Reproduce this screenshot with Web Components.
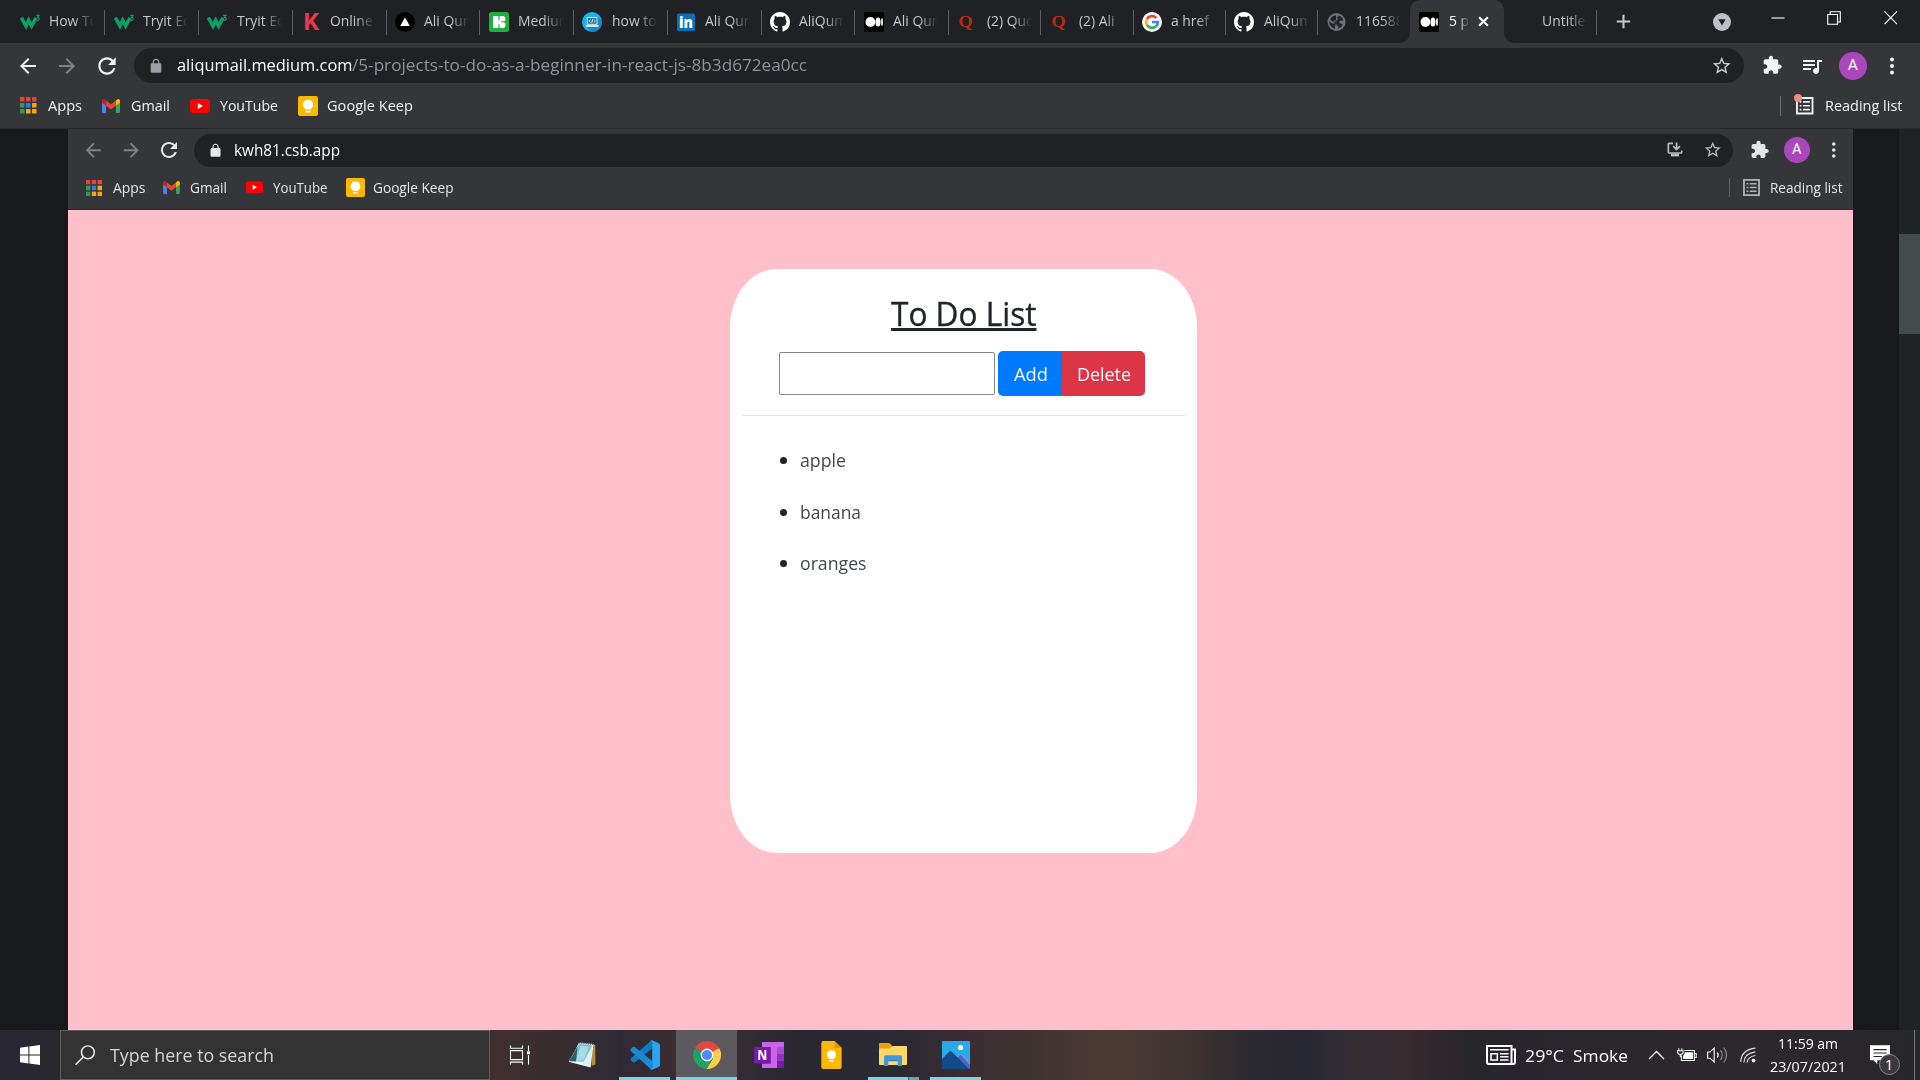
<!DOCTYPE html>
<html lang="en">
<head>
<meta charset="utf-8">
<title>5 projects to do as a beginner in React JS</title>
<style>
html,body{margin:0;padding:0;width:1920px;height:1080px;overflow:hidden;background:#18191a}
body{font-family:"Open Sans","Noto Sans",sans-serif;color:#e8eaed}
</style>
</head>
<body>
<desktop-screen></desktop-screen>
<script>
const ICONS = {
  back: ['0 0 24 24', '<path fill="currentColor" d="M20 11H7.83l5.59-5.59L12 4l-8 8 8 8 1.41-1.41L7.83 13H20v-2z"/>'],
  forward: ['0 0 24 24', '<path fill="currentColor" d="M12 4l-1.41 1.41L16.17 11H4v2h12.17l-5.58 5.59L12 20l8-8z"/>'],
  reload: ['0 0 24 24', '<path fill="currentColor" d="M17.65 6.35C16.2 4.9 14.21 4 12 4c-4.42 0-7.99 3.58-7.99 8s3.57 8 7.99 8c3.73 0 6.84-2.55 7.73-6h-2.08c-.82 2.33-3.04 4-5.65 4-3.31 0-6-2.69-6-6s2.69-6 6-6c1.66 0 3.14.69 4.22 1.78L13 11h7V4l-2.35 2.35z"/>'],
  lock: ['0 0 24 24', '<path fill="currentColor" d="M18 8h-1V6c0-2.76-2.24-5-5-5S7 3.24 7 6v2H6c-1.1 0-2 .9-2 2v10c0 1.1.9 2 2 2h12c1.1 0 2-.9 2-2V10c0-1.1-.9-2-2-2zm-2.9 0H8.9V6c0-1.71 1.39-3.1 3.1-3.1 1.71 0 3.1 1.39 3.1 3.1v2z"/>'],
  star: ['0 0 24 24', '<path fill="currentColor" d="M22 9.24l-7.19-.62L12 2 9.19 8.63 2 9.24l5.46 4.73L5.82 21 12 17.27 18.18 21l-1.63-7.03L22 9.24zM12 15.4l-3.76 2.27 1-4.28-3.32-2.88 4.38-.38L12 6.1l1.71 4.04 4.38.38-3.32 2.88 1 4.28L12 15.4z"/>'],
  puzzle: ['0 0 24 24', '<path fill="currentColor" d="M20.5 11H19V7c0-1.1-.9-2-2-2h-4V3.5C13 2.12 11.88 1 10.5 1S8 2.12 8 3.5V5H4c-1.1 0-1.99.9-1.99 2v3.8H3.5c1.49 0 2.7 1.21 2.7 2.7s-1.21 2.7-2.7 2.7H2V20c0 1.1.9 2 2 2h3.8v-1.5c0-1.49 1.21-2.7 2.7-2.7 1.49 0 2.7 1.21 2.7 2.7V22H17c1.1 0 2-.9 2-2v-4h1.5c1.38 0 2.5-1.12 2.5-2.5S21.88 11 20.5 11z"/>'],
  queue: ['0 0 24 24', '<path fill="currentColor" d="M15 6H3v2h12V6zm0 4H3v2h12v-2zM3 16h8v-2H3v2zM17 6v8.18c-.31-.11-.65-.18-1-.18-1.66 0-3 1.34-3 3s1.34 3 3 3 3-1.34 3-3V8h3V6h-5z"/>'],
  dots: ['0 0 6 20', '<g fill="currentColor"><circle cx="3" cy="3.4" r="2"/><circle cx="3" cy="10" r="2"/><circle cx="3" cy="16.6" r="2"/></g>'],
  install: ['0 0 18 18', '<g fill="none" stroke="currentColor" stroke-width="1.7"><path d="M7 2.3H3.2Q2.3 2.3 2.3 3.2V11Q2.3 12 3.2 12H14.8Q15.7 12 15.7 11V9.5"/><path d="M10.6 1.5V8.2M7.2 5.2L10.6 8.6L14 5.2"/></g><rect x="5" y="12.6" width="8" height="2.8" fill="currentColor"/>'],
  w3: ['0 0 20 20', '<path fill="none" stroke="#0ba06a" stroke-width="3.6" d="M1.4 5.6L6 14L8.7 8.4L11.6 14L16 5.8"/><path fill="none" stroke="#0ba06a" stroke-width="1.2" d="M16.2 3.3H19L17.4 5.4Q19.4 5.5 19.2 7Q18.9 8.8 16.3 8"/>'],
  k: ['0 0 20 20', '<text x="2.6" y="18.4" font-family="Roboto,sans-serif" font-weight="700" font-size="23.5" textLength="15.5" lengthAdjust="spacingAndGlyphs" fill="#e63950">K</text>'],
  vercel: ['0 0 20 20', '<circle cx="10" cy="10" r="10" fill="#000"/><path fill="#fff" d="M10 5.6L14.8 14H5.2z"/>'],
  biz: ['0 0 20 20', '<rect width="20" height="20" rx="2.5" fill="#1faf3c"/><path fill="#fff" d="M4 4h5.2l.9 1.2L11 4h3.3q2.2.5 2 2.5v2L15 9.8l1.4 1.6V14q-.3 1.8-2.2 2H11l-.9-1-.9 1H4z"/><path stroke="#1faf3c" d="M10 4V8.5M10 12V16M12 9.8H16.3"/>'],
  howto: ['0 0 20 20', '<circle cx="10" cy="10" r="10" fill="#14b6f0"/><path d="M16 5L19.9 9A10 10 0 0 1 9 20L5 15z" fill="#1788c4"/><rect x="5" y="5" width="10.5" height="7.8" rx=".8" fill="#e3f0f6"/><rect x="6" y="6" width="8.5" height="5.8" fill="#2d6c9b"/><path d="M8.5 7.5L7.2 9L8.5 10.5M12 7.5L13.3 9L12 10.5M10.8 7L9.7 11" stroke="#fff" stroke-width=".8" fill="none"/><path d="M4 13h12.5v2H4z" fill="#dbe8ee"/>'],
  linkedin: ['0 0 20 20', '<rect x="1" y="1.5" width="18" height="17.5" rx="1.5" fill="#0a6fb3"/><text x="2.9" y="16" font-family="Open Sans,sans-serif" font-weight="800" font-size="15.5" textLength="14" lengthAdjust="spacingAndGlyphs" fill="#fff">in</text>'],
  github: ['0 0 16 16', '<path fill="#fff" d="M8 0C3.58 0 0 3.58 0 8c0 3.54 2.29 6.53 5.47 7.59.4.07.55-.17.55-.38 0-.19-.01-.82-.01-1.49-2.01.37-2.53-.49-2.69-.94-.09-.23-.48-.94-.82-1.13-.28-.15-.68-.52-.01-.53.63-.01 1.08.58 1.23.82.72 1.21 1.87.87 2.33.66.07-.52.28-.87.51-1.07-1.78-.2-3.64-.89-3.64-3.95 0-.87.31-1.59.82-2.15-.08-.2-.36-1.02.08-2.12 0 0 .67-.21 2.2.82.64-.18 1.32-.27 2-.27s1.36.09 2 .27c1.53-1.04 2.2-.82 2.2-.82.44 1.1.16 1.92.08 2.12.51.56.82 1.27.82 2.15 0 3.07-1.87 3.75-3.65 3.95.29.25.54.73.54 1.48 0 1.07-.01 1.93-.01 2.2 0 .21.15.46.55.38A8.01 8.01 0 0 0 16 8c0-4.42-3.58-8-8-8z"/>'],
  medium: ['0 0 20 20', '<rect width="20" height="20" rx="1.5" fill="#000"/><g fill="#fff"><circle cx="6.4" cy="10" r="4.9"/><ellipse cx="14" cy="10" rx="2.5" ry="4.6"/><ellipse cx="18" cy="10" rx=".9" ry="4"/></g>'],
  quora: ['0 0 20 20', '<text x="1.2" y="14.6" font-family="Liberation Serif,serif" font-weight="700" font-size="17.5" textLength="14.5" lengthAdjust="spacingAndGlyphs" fill="#b92b08">Q</text>'],
  google: ['0 0 20 20', '<circle cx="10" cy="10" r="10" fill="#fff"/><g fill="none" stroke-width="2.7"><path stroke="#ea4335" d="M14.3 6A5.9 5.9 0 0 0 4.9 7.1"/><path stroke="#fbbc05" d="M4.9 7.1A5.9 5.9 0 0 0 4.9 12.9"/><path stroke="#34a853" d="M4.9 12.9A5.9 5.9 0 0 0 13.9 14.4"/><path stroke="#4285f4" d="M13.9 14.4A5.9 5.9 0 0 0 15.9 10H10"/></g>'],
  globe: ['0 0 20 20', '<circle cx="9.5" cy="10" r="9" fill="#6d7175"/><path fill="#222327" d="M8.8 3.2Q4.6 3.8 3.2 7.6L5 9.3L8.8 9.6L9.6 11.5L8.2 13L8 16.8Q4.5 16.2 2.6 12.6L2.4 9.5L6 12L7.8 11.3L6.9 8.4H9.6L11.3 6.7L9.4 5.5L12.5 3.7Q16 5.5 16.5 8.8L13 8.5L12 10.8L15.8 12.5Q14.7 15.5 11 16.8L11.7 14.2L9.6 13.4z"/>'],
  blank: ['0 0 20 20', ''],
  close: ['0 0 14 14', '<path d="M2.3 2.3L11.7 11.7M11.7 2.3L2.3 11.7" stroke="#fff" stroke-width="2.3"/>'],
  plus: ['0 0 16 16', '<path d="M8 .8V15.2M.8 8H15.2" stroke="#c6c8cb" stroke-width="2.2"/>'],
  tabsearch: ['0 0 18 18', '<circle cx="9" cy="9" r="9" fill="#bdc1c6"/><path d="M5.3 6.2H12.7L9 12.4z" fill="#202124"/>'],
  minimize: ['0 0 14 14', '<path d="M.5 7H13.5" stroke="#fff" stroke-width="1.1"/>'],
  restore: ['0 0 14 14', '<path d="M.7 3.5H10.5V13.3H.7zM3.2 3.5V.8H13.3V11H10.5" fill="none" stroke="#fff" stroke-width="1.1"/>'],
  winclose: ['0 0 14 14', '<path d="M.5 .5L13.5 13.5M13.5 .5L.5 13.5" stroke="#fff" stroke-width="1.15"/>'],
  apps: ['0 0 17 17', '<g><path fill="#e8453c" d="M0 0h4.6v4.6H0zM6.2 0h4.6v4.6H6.2zM12.4 0H17v4.6h-4.6z"/><path fill="#34995a" d="M0 6.2h4.6v4.6H0zM0 12.4h4.6V17H0z"/><path fill="#2a7de8" d="M6.2 6.2h4.6v4.6H6.2z"/><path fill="#f6a80c" d="M6.2 12.4h4.6V17H6.2z"/><path fill="#f6a80c" d="M12.4 6.2H17v4.6h-4.6zM12.4 12.4H17V17h-4.6z"/></g>'],
  gmail: ['0 0 18 14', '<path fill="#4285f4" d="M0 3V12.8Q0 14 1.2 14H4.1V6z"/><path fill="#34a853" d="M18 3V12.8Q18 14 16.8 14H13.9V6z"/><path fill="#ea4335" d="M4.1 1.6L9 5.3L13.9 1.6V6.8L9 10.5L4.1 6.8z"/><path fill="#c5221f" d="M0 2Q0 .2 1.8.1Q2.6 0 4.1 1.6V6.8L0 3.7z"/><path fill="#fbbc04" d="M18 2Q18 .2 16.2.1Q15.4 0 13.9 1.6V6.8L18 3.7z"/>'],
  youtube: ['0 0 20 14', '<rect width="20" height="14" rx="3.4" fill="#f00"/><path fill="#fff" d="M7.8 4V10L13 7z"/>'],
  keep: ['0 0 20 20', '<rect width="20" height="20" rx="2" fill="#fdb902"/><path fill="#fff" d="M10 3.8A4.9 4.9 0 0 0 7.3 12.9V13.6H12.7V12.9A4.9 4.9 0 0 0 10 3.8zM7.6 14.8H12.4V16.4H7.6z"/>'],
  reading: ['0 0 18 18', '<path fill="none" stroke="currentColor" stroke-width="1.9" d="M1 1H17V17H1z"/><path d="M3.8 5H5.6M3.8 9H5.6M3.8 13H5.6M7.2 5H14.3M7.2 9H14.3M7.2 13H14.3" stroke="currentColor" stroke-width="1.7"/>'],
  windows: ['0 0 20 20', '<path fill="#fff" d="M0 2.8L8.4 1.6V9.5H0zM9.4 1.4L20 0V9.5H9.4zM0 10.5H8.4V18.4L0 17.2zM9.4 10.5H20V20L9.4 18.6z"/>'],
  search: ['0 0 21 21', '<g fill="none" stroke="#f1f1f1" stroke-width="1.5"><circle cx="13.2" cy="7.5" r="6.6"/><path d="M8.4 12.2L.6 20.2"/></g>'],
  taskview: ['0 0 20 20', '<g fill="none" stroke="#fff" stroke-width="1.1"><path d="M.5 5.6H12.5V14.6H.5zM.5 .5V3.2H12.5V.5M.5 19.5V17.1H12.5V19.5M18.5 .5V6M18.5 10V19.5"/></g><path fill="#fff" d="M17 6.3h3v3h-3z"/>'],
  notepad: ['0 0 28 28', '<path fill="#b98c3b" d="M24.5 3L27.3 4.2L27.4 23.5L23.5 25z"/><path fill="#f1f5f5" d="M11 1.5L25.5 3L22.6 26.6L.5 20.7L6 11.5z"/><path fill="#7fc3d0" d="M11 2.8L24.4 4.5L17.5 21L1.2 20z"/><path fill="#2f5f6b" d="M9.5 5.5L1.2 20L8 20.5z"/><path fill="#a8dce3" d="M12.5 5L21 6L15.5 19L8 20z"/><path fill="#dfeff1" d="M24.5 4.5L21.4 25.8L14 23.5z"/><path d="M11 1.7L25 3.2" stroke="#555" stroke-width="1.6" stroke-dasharray="1.3 .9"/>'],
  vscode: ['0 0 30 30', '<path fill="#0e7cc4" d="M1 18.2Q-.2 19.4 1 20.6L2.8 22.3Q3.8 23 4.8 22.3L22.2 8.6V.3Q21.4 0 20.6 .9z"/><path fill="#1a8ad6" d="M1 11.2Q-.2 10 1 8.8L2.8 7.1Q3.8 6.4 4.8 7.1L22.2 21V29.7Q21.4 30 20.6 29z"/><path fill="#2aa4f4" d="M22.2 .2L28.8 3.2Q30 3.9 30 5.1V24.8Q30 26.1 28.8 26.7L22.2 29.8Q21 30 20.3 29Q21.8 29.2 22.2 27.9V2.2Q21.8 .7 20.3 1.1Q21 0 22.2 .2z"/>'],
  chrome: ['0 0 28 28', '<path fill="#dd4b3e" d="M14 14L1.9 7A14 14 0 0 1 26.1 7z"/><path fill="#1da462" d="M14 14L14 28A14 14 0 0 1 1.9 7L8 17.5z"/><path fill="#ffcd46" d="M14 14L26.1 7A14 14 0 0 1 13.5 28L20 17.5z"/><path fill="#dd4b3e" d="M14 7.5H26.4L25 5H14z"/><path fill="#1da462" d="M8.3 17.2L2 7L14 14L19.8 17.5L13.6 28L11 20z"/><circle cx="14" cy="14" r="6.4" fill="#f5f7fb"/><circle cx="14" cy="14" r="5.1" fill="#4c8bf5"/>'],
  onenote: ['0 0 30 26', '<path fill="#ca64ea" d="M8 0H30V26H8z"/><path fill="#ae4bd5" d="M23 5h7v7h-7z"/><path fill="#9332bf" d="M23 12h7v7h-7z"/><path fill="#7719aa" d="M23 19h7v7h-7z"/><path fill="#7a3193" d="M8 5h9v17H8z" opacity=".6"/><path fill="#7719aa" d="M0 5h16.5v16.5H0z"/><text x="3.2" y="18" font-family="Open Sans,sans-serif" font-weight="700" font-size="13.5" fill="#fff" textLength="10" lengthAdjust="spacingAndGlyphs">N</text>'],
  keepfile: ['0 0 21 28', '<path fill="#fdb903" d="M2 0H13.6L20.6 7V26Q20.6 28 18.6 28H2Q.3 28 .3 26V2Q.3 0 2 0z"/><path fill="#f38f00" d="M13.6 0L20.6 7H13.6z"/><path fill="#fff" d="M10.5 9.3A4.3 4.3 0 0 0 8 17.2V18H13V17.2A4.3 4.3 0 0 0 10.5 9.3zM8.4 19H12.6V20.4H8.4z"/>'],
  explorer: ['0 0 28 24', '<path fill="#e5a50a" d="M0 1Q0 0 1 0H10.5L13 2.5V8H0z"/><path fill="#ffd768" d="M0 5.5H10.5L13.5 3H27Q28 3 28 4V21Q28 22 27 22H1Q0 22 0 21z"/><path fill="#3f97dc" d="M5 23V14Q5 12.3 6.7 12.3H21.3Q23 12.3 23 14V23H18.7V17H9.3V23z"/><path fill="#2e7cc2" d="M9.3 17h9.4v1.2H9.3z"/>'],
  photos: ['0 0 28 28', '<rect width="28" height="28" rx="1" fill="#29abe9"/><path fill="#7f8ce0" d="M14 17L19.5 12.7L28 21.5V28H14z"/><path fill="#4866c9" d="M15 17.5L18.6 13.8L28 24V28H15z"/><path fill="#144a86" d="M0 18L7.4 10.6Q8.5 9.6 9.6 10.6L27 28H0z"/><circle cx="18.5" cy="6.5" r="2.6" fill="#f4fbff"/>'],
  news: ['0 0 30 20', '<g fill="none" stroke="#fff"><path stroke-width="2" d="M1 1H25.5V19H3Q1 19 1 17zM25.5 4.5H29V17Q29 19 27 19H24"/><path stroke-width="1.4" d="M4 4.8H22.5M14 8.7H22.5M14 11.8H22.5M14 15H22.5"/><path stroke-width="1.6" d="M5 8.8H11.3V15H5z"/></g>'],
  chevron: ['0 0 17 10', '<path d="M1 9L8.5 1.5L16 9" fill="none" stroke="#fff" stroke-width="1.3"/>'],
  battery: ['0 0 21 16', '<path fill="none" stroke="#fff" stroke-width="1.1" d="M7.5 2.6H18.4V13.4H4.5V8M18.5 5.8H20.3V10.2H18.5M1.8 .3V3M5 .3V3M.5 3H6.3V5.2Q5.8 6.8 3.4 6.8Q1 6.8 .5 5.2zM3.4 7V9.5"/><path fill="#fff" d="M8 4.4h9v7.2H6.3V8.2Q8 7 8 4.4z"/>'],
  speaker: ['0 0 21 18', '<path fill="none" stroke="#fff" stroke-width="1.1" d="M.6 6V12.2H3L7.2 16V2.2L3 6z"/><path d="M10.3 6.7Q12 9 10.3 11.5" fill="none" stroke="#fff" stroke-width="1.2"/><path d="M13.5 4.2Q17 9 13.5 14M16.8 1.7Q22.3 9 16.8 16.5" fill="none" stroke="#8b898d" stroke-width="1.2"/>'],
  wifi: ['0 0 17 17', '<g fill="none" stroke="#ddd" stroke-width="1.2"><path d="M.8 15.5Q1 3 15.8 1.2"/><path d="M4 16Q4.5 6.5 15.8 5"/><path d="M7.3 16Q8 10 15.8 8.8"/></g><circle cx="14" cy="14" r="2" fill="#fff"/>'],
  notice: ['0 0 21 20', '<path fill="#fff" d="M0 0H20.5V15.5H7.5V19.5L3.8 15.5H0z"/><path d="M3.5 4.5H17M3.5 8H17M3.5 11.5H12" stroke="#29272c" stroke-width="1.1"/>']
};

function define(name, html, setup) {
  const template = document.createElement('template');
  template.innerHTML = html;
  customElements.define(name, class extends HTMLElement {
    connectedCallback() {
      if (this.shadowRoot) return;
      const root = this.attachShadow({ mode: 'open' });
      root.append(template.content.cloneNode(true));
      if (setup) setup(this, root);
    }
  });
}

/* Vector icon: name, w (width), h (height, defaults to width). */
define('ui-icon', '<style>:host{display:block;flex:none}svg{display:block;width:100%;height:100%;overflow:visible}</style><svg></svg>', (el, root) => {
  const [box, body] = ICONS[el.getAttribute('name')];
  const w = el.getAttribute('w'), h = el.getAttribute('h') || w;
  el.style.width = w + 'px';
  el.style.height = h + 'px';
  const svg = root.querySelector('svg');
  svg.setAttribute('viewBox', box);
  svg.innerHTML = body;
});

/* Single-line label condensed to the width in w. */
define('fit-label', '<style>:host{display:block;flex:none;white-space:pre}span{display:inline-block;transform-origin:0 50%;line-height:inherit}:host([underlined]) span{text-decoration:underline;text-decoration-thickness:3px;text-underline-offset:2px;text-decoration-skip-ink:none}</style><span><slot></slot></span>', (el, root) => {
  const span = root.querySelector('span');
  const w = +el.getAttribute('w');
  const natural = span.getBoundingClientRect().width;
  el.style.width = w + 'px';
  span.style.transform = `scaleX(${w / natural})`;
});

define('user-avatar', `<style>
:host{display:flex;flex:none;align-items:center;justify-content:center;width:var(--s);height:var(--s);border-radius:50%;background:#ab47bc;color:#fff;font-family:Roboto,sans-serif;font-weight:400;font-size:15.5px;line-height:1}
span{margin-top:1px}
</style><span><slot></slot></span>`);

define('browser-tab', `<style>
:host{display:flex;flex:none;box-sizing:border-box;width:93.75px;height:43px;padding-left:8.4px;align-items:center;position:relative;color:#c3c6ca}
:host([narrow]){width:92.3px}
.label{width:45px;margin-left:9.3px;overflow:hidden;white-space:nowrap;font-size:14.8px;line-height:24px;margin-top:-2.5px;-webkit-mask-image:linear-gradient(90deg,#000 26px,transparent 45px);mask-image:linear-gradient(90deg,#000 26px,transparent 45px)}
.label span{display:inline-block;transform:scaleX(.94);transform-origin:0 50%}
.sep{width:1px;height:25px;background:#5d5f63;margin-left:auto;margin-top:1px}
:host([active]) .sep,:host([last]) .sep{display:none}
:host([active]){background:#35363a;border-radius:10px 10px 0 0;width:94px;color:#fff;padding-left:9px}
:host([active]) .label{width:19px;-webkit-mask-image:linear-gradient(90deg,#000 9px,transparent 20px);mask-image:linear-gradient(90deg,#000 9px,transparent 20px)}
.x{display:none;margin-left:9.5px}
:host([active]) .x{display:block}
:host([active])::before,:host([active])::after{content:"";position:absolute;bottom:0;width:10px;height:10px}
:host([active])::before{left:-10px;background:radial-gradient(circle at 0 0,transparent 9.5px,#35363a 10.2px)}
:host([active])::after{right:-10px;background:radial-gradient(circle at 100% 0,transparent 9.5px,#35363a 10.2px)}
</style><div class="ico"></div><div class="label"><span><slot></slot></span></div><ui-icon class="x" name="close" w="13"></ui-icon><div class="sep"></div>`, (el, root) => {
  root.querySelector('.ico').innerHTML = `<ui-icon name="${el.getAttribute('icon')}" w="20"></ui-icon>`;
});

define('tab-strip', `<style>
:host{display:flex;height:43px;padding-left:11.5px;background:#202124;align-items:center}
ui-icon{margin-left:var(--m)}
</style>
<browser-tab icon="w3">How To</browser-tab><browser-tab icon="w3">Tryit Ed</browser-tab><browser-tab icon="w3">Tryit Ed</browser-tab><browser-tab icon="k">Online</browser-tab><browser-tab icon="vercel">Ali Qum</browser-tab><browser-tab icon="biz">Medium</browser-tab><browser-tab icon="howto">how to</browser-tab><browser-tab icon="linkedin">Ali Qum</browser-tab><browser-tab icon="github">AliQum</browser-tab><browser-tab icon="medium">Ali Qum</browser-tab><browser-tab narrow icon="quora">(2) Quo</browser-tab><browser-tab narrow icon="quora">(2) Ali</browser-tab><browser-tab narrow icon="google">a href</browser-tab><browser-tab narrow icon="github">AliQum</browser-tab><browser-tab narrow last icon="globe">116588</browser-tab><browser-tab active icon="medium">5 p</browser-tab><browser-tab narrow icon="blank">Untitle</browser-tab>
<ui-icon name="plus" w="15" style="--m:19px"></ui-icon>
<ui-icon name="tabsearch" w="18" style="--m:82px"></ui-icon>
<ui-icon name="minimize" w="14" style="--m:40px;margin-top:-7px"></ui-icon>
<ui-icon name="restore" w="14" style="--m:42px;margin-top:-7px"></ui-icon>
<ui-icon name="winclose" w="13.5" style="--m:43.5px;margin-top:-7px"></ui-icon>`);

define('browser-toolbar', `<style>
:host{display:block;height:86px;box-sizing:border-box;background:#35363a;border-bottom:1px solid #27282b;color:#f1f3f4}
.row{display:flex;align-items:center}
.nav{height:45px}
.marks{height:37px;margin-top:-1px;font-size:14.7px;line-height:24px}
.marks fit-label{margin-top:-2px}
ui-icon,fit-label,user-avatar{margin-left:var(--m)}
.omni{display:flex;align-items:center;width:1610px;height:35px;border-radius:18px;background:#202124;margin-left:14px;box-sizing:border-box;padding:0 12px 0 14px;font-size:17.1px;line-height:28px}
.omni fit-label{margin-top:-.5px}
.right{margin-left:auto;display:flex;align-items:center;padding-right:18px}
.sep{width:1px;height:20px;background:#6a6c70}
.unread{position:relative}
.unread i{position:absolute;left:13px;top:-3px;width:8px;height:8px;border-radius:50%;background:#f28b82}
</style>
<div class="row nav">
<ui-icon name="back" w="24" style="--m:15.5px"></ui-icon>
<ui-icon name="forward" w="24" style="--m:15.5px;color:#808286"></ui-icon>
<ui-icon name="reload" w="26" style="--m:15px"></ui-icon>
<div class="omni"><ui-icon name="lock" w="16" style="color:#9aa0a6"></ui-icon><fit-label w="175.5" style="--m:12.5px;color:#fff">aliqumail.medium.com</fit-label><fit-label w="455" style="color:#8f9398">/5-projects-to-do-as-a-beginner-in-react-js-8b3d672ea0cc</fit-label><ui-icon name="star" w="21.5" style="--m:auto;color:#c8cacc"></ui-icon></div>
<ui-icon name="puzzle" w="20.5" style="--m:17.8px"></ui-icon>
<ui-icon name="queue" w="24" style="--m:17.5px"></ui-icon>
<user-avatar style="--s:28px;--m:15px">A</user-avatar>
<ui-icon name="dots" w="6" h="20" style="--m:22.5px"></ui-icon>
</div>
<div class="row marks">
<ui-icon name="apps" w="16.5" style="--m:20px"></ui-icon><fit-label w="34" style="--m:11px">Apps</fit-label>
<ui-icon name="gmail" w="18" h="14" style="--m:20.5px"></ui-icon><fit-label w="39" style="--m:11px">Gmail</fit-label>
<ui-icon name="youtube" w="20" h="14" style="--m:19.5px"></ui-icon><fit-label w="58" style="--m:10px">YouTube</fit-label>
<ui-icon name="keep" w="20" style="--m:20px"></ui-icon><fit-label w="86" style="--m:9px">Google Keep</fit-label>
<div class="right"><div class="sep"></div><div class="unread"><ui-icon name="reading" w="17.5" style="--m:15px"></ui-icon><i></i></div><fit-label w="77.5" style="--m:11px">Reading list</fit-label></div>
</div>`);

define('captured-toolbar', `<style>
:host{display:block;height:81px;box-sizing:border-box;background:#35363a;border-bottom:1px solid #2c2a2d;color:#e4e6e8}
.row{display:flex;align-items:center}
.nav{height:42px}
.marks{height:33px;font-size:14px;line-height:24px}
ui-icon,fit-label,user-avatar{margin-left:var(--m)}
.omni{display:flex;align-items:center;width:1539px;height:33px;border-radius:17px;background:#202124;margin-left:13.5px;box-sizing:border-box;padding:0 11px 0 13.5px;font-size:16.2px;line-height:26px}
.right{margin-left:auto;display:flex;align-items:center;padding-right:11px}
.sep{width:1px;height:19px;background:#5d5f63}
</style>
<div class="row nav">
<ui-icon name="back" w="22.5" style="--m:14px;color:#808286"></ui-icon>
<ui-icon name="forward" w="22.5" style="--m:15px;color:#808286"></ui-icon>
<ui-icon name="reload" w="24" style="--m:14.5px"></ui-icon>
<div class="omni"><ui-icon name="lock" w="15"></ui-icon><fit-label w="106" style="--m:11.7px;color:#fff">kwh81.csb.app</fit-label><ui-icon name="install" w="18" style="--m:auto;color:#b9bbbe"></ui-icon><ui-icon name="star" w="19.5" style="--m:18.5px;color:#b9bbbe"></ui-icon></div>
<ui-icon name="puzzle" w="19.5" style="--m:16.5px"></ui-icon>
<user-avatar style="--s:26.5px;--m:14.5px;font-size:14.5px">A</user-avatar>
<ui-icon name="dots" w="5.5" h="18" style="--m:21px"></ui-icon>
</div>
<div class="row marks">
<ui-icon name="apps" w="16" style="--m:18px"></ui-icon><fit-label w="32.5" style="--m:10.5px">Apps</fit-label>
<ui-icon name="gmail" w="17" h="13" style="--m:18px"></ui-icon><fit-label w="37" style="--m:9.5px">Gmail</fit-label>
<ui-icon name="youtube" w="17" h="12.5" style="--m:19.5px"></ui-icon><fit-label w="54.5" style="--m:10px">YouTube</fit-label>
<ui-icon name="keep" w="19" style="--m:18px"></ui-icon><fit-label w="80.5" style="--m:8.5px">Google Keep</fit-label>
<div class="right"><div class="sep"></div><ui-icon name="reading" w="17" style="--m:13px;color:#b0b1b3"></ui-icon><fit-label w="72.5" style="--m:10px">Reading list</fit-label></div>
</div>`);

define('todo-item', `<style>
:host{display:flex;align-items:center;height:51.4px;color:#43474b;font-size:17.9px;line-height:30px}
i{width:7px;height:7px;border-radius:50%;background:#212529;margin-right:13px;margin-top:1.5px}
</style><i></i><slot></slot>`);

define('todo-card', `<style>
:host{display:block;box-sizing:border-box;width:467px;height:584px;border-radius:10%;background:#fff;color:#212529;padding:21px 12px 0}
h1{margin:0;display:flex;justify-content:center;font-weight:500;font-size:32px;line-height:48px;-webkit-text-stroke:.35px #212529}
.form{display:flex;align-items:center;height:45px;margin-top:13px;padding-left:37px}
.input{box-sizing:border-box;width:216px;height:43.5px;border:1px solid #858585;border-radius:2px;margin-right:3px}
.btn{display:flex;align-items:center;height:45px;box-sizing:border-box;padding-left:15.5px;font-size:18px;line-height:30px;color:#f4f8ff}
.btn fit-label{margin-top:1px}
.add{width:63.5px;background:#007bff;border-radius:5px 0 0 5px}
.del{width:83.5px;padding-left:15px;background:#dc3545;border-radius:0 5px 5px 0}
hr{border:0;height:1px;background:#e5e5e5;margin:18.5px 0 19px}
.list{padding-left:38px}
</style>
<h1><fit-label underlined w="145.5">To Do List</fit-label></h1>
<div class="form"><div class="input"></div><div class="btn add"><fit-label w="34">Add</fit-label></div><div class="btn del"><fit-label w="54">Delete</fit-label></div></div>
<hr>
<div class="list"><todo-item><fit-label w="46">apple</fit-label></todo-item><todo-item><fit-label w="61">banana</fit-label></todo-item><todo-item><fit-label w="66.5">oranges</fit-label></todo-item></div>`);

define('page-view', `<style>
:host{display:flex;height:901px;background:#18191a}
.shot{margin-left:68px;width:1785px;height:901px;background:#ffc0cb}
.canvas{display:flex;padding:59px 0 0 662px}
.track{margin-left:auto;width:21px;background:#202324;padding-top:105px;box-sizing:border-box}
.thumb{height:100px;background:#454a4d}
</style>
<div class="shot"><captured-toolbar></captured-toolbar><div class="canvas"><todo-card></todo-card></div></div>
<div class="track"><div class="thumb"></div></div>`);

define('task-button', `<style>
:host{display:flex;flex:none;flex-direction:column;width:62.2px;height:50px;align-items:center}
.ico{flex:1;display:flex;align-items:center;justify-content:center}
.bar{height:3px;width:51px;display:flex}
:host([open]) .bar{background:#80d3da}
:host([active]){background:#5d5a5f;width:61px;margin:0 .6px}
:host([active]) .bar{width:61px}
:host([multi]) .bar{background:linear-gradient(90deg,#80d3da 40px,#3f6f75 40px,#3f6f75 41px,#68a6ad 41px)}
</style><div class="ico"><slot></slot></div><div class="bar"></div>`);

define('task-bar', `<style>
:host{display:flex;height:50px;align-items:center;background:linear-gradient(90deg,#292733 0,#2a282e 60px,#38302f 400px,#402f2f 495px,#382d30 560px,#2e2a35 620px,#3a2d31 670px,#332c33 740px,#29272f 800px,#2b2931 900px,#3a2c34 965px,#3e3230 1022px,#4a3a35 1112px,#403431 1186px,#2b2930 1251px,#282833 1308px,#332d32 1357px,#37292e 1410px,#26252a 1471px,#2a272d 1600px,#2c282e 1750px,#27262a 1920px);color:#fff}
.start{margin-left:20px}
.search{display:flex;align-items:center;box-sizing:border-box;width:430px;height:50px;border:1px solid #5f5f5f;background:#333;margin-left:20px;margin-right:-.8px;padding-left:14px;color:#d6d6d6;font-size:17.9px;line-height:30px}
.search fit-label{margin-left:14.5px}
.tray{margin-left:auto;display:flex;align-items:center;height:50px;font-size:17.2px;line-height:30px}
.tray>ui-icon,.tray>fit-label{margin-left:var(--m)}
.clock{display:flex;flex-direction:column;align-items:center;width:77px;margin-left:13px;font-size:14.8px;line-height:23px;margin-top:-1px}
.note{position:relative;margin-left:23px}
.note b{position:absolute;left:9px;top:9px;width:19px;height:19px;border-radius:50%;background:#3b393b;border:1px solid #8b8b8b;font-weight:400;font-size:15px;line-height:19px;text-align:center}
.edge{width:1px;height:50px;background:#77757a;margin:0 5px 0 24px}
</style>
<ui-icon class="start" name="windows" w="20"></ui-icon>
<div class="search"><ui-icon name="search" w="20.5"></ui-icon><fit-label w="164">Type here to search</fit-label></div>
<task-button><ui-icon name="taskview" w="20" style="margin-top:3px"></ui-icon></task-button>
<task-button><ui-icon name="notepad" w="28" style="margin-top:2px"></ui-icon></task-button>
<task-button open><ui-icon name="vscode" w="30" style="margin-top:3px"></ui-icon></task-button>
<task-button open active><ui-icon name="chrome" w="28" style="margin-top:3px"></ui-icon></task-button>
<task-button><ui-icon name="onenote" w="30" h="26" style="margin-top:3px"></ui-icon></task-button>
<task-button><ui-icon name="keepfile" w="21" h="28" style="margin-top:3px"></ui-icon></task-button>
<task-button open multi><ui-icon name="explorer" w="28" h="24" style="margin-top:3px"></ui-icon></task-button>
<task-button open><ui-icon name="photos" w="28" style="margin-top:3px"></ui-icon></task-button>
<div class="tray">
<ui-icon name="news" w="30" h="20"></ui-icon>
<fit-label w="39" style="--m:9.5px;margin-top:2px">29°C</fit-label>
<fit-label w="55" style="--m:9px;margin-top:2px">Smoke</fit-label>
<ui-icon name="chevron" w="17" h="10" style="--m:20px"></ui-icon>
<ui-icon name="battery" w="20" h="15" style="--m:12px"></ui-icon>
<ui-icon name="speaker" w="21" h="18" style="--m:9.5px"></ui-icon>
<ui-icon name="wifi" w="16.5" style="--m:12.5px"></ui-icon>
<div class="clock"><fit-label w="60">11:59 am</fit-label><fit-label w="76">23/07/2021</fit-label></div>
<div class="note"><ui-icon name="notice" w="20.5" h="20"></ui-icon><b>1</b></div>
<div class="edge"></div>
</div>`);

define('desktop-screen', `<style>
:host{display:flex;flex-direction:column;width:1920px;height:1080px;overflow:hidden}
</style><tab-strip></tab-strip><browser-toolbar></browser-toolbar><page-view></page-view><task-bar></task-bar>`);
</script>
</body>
</html>
